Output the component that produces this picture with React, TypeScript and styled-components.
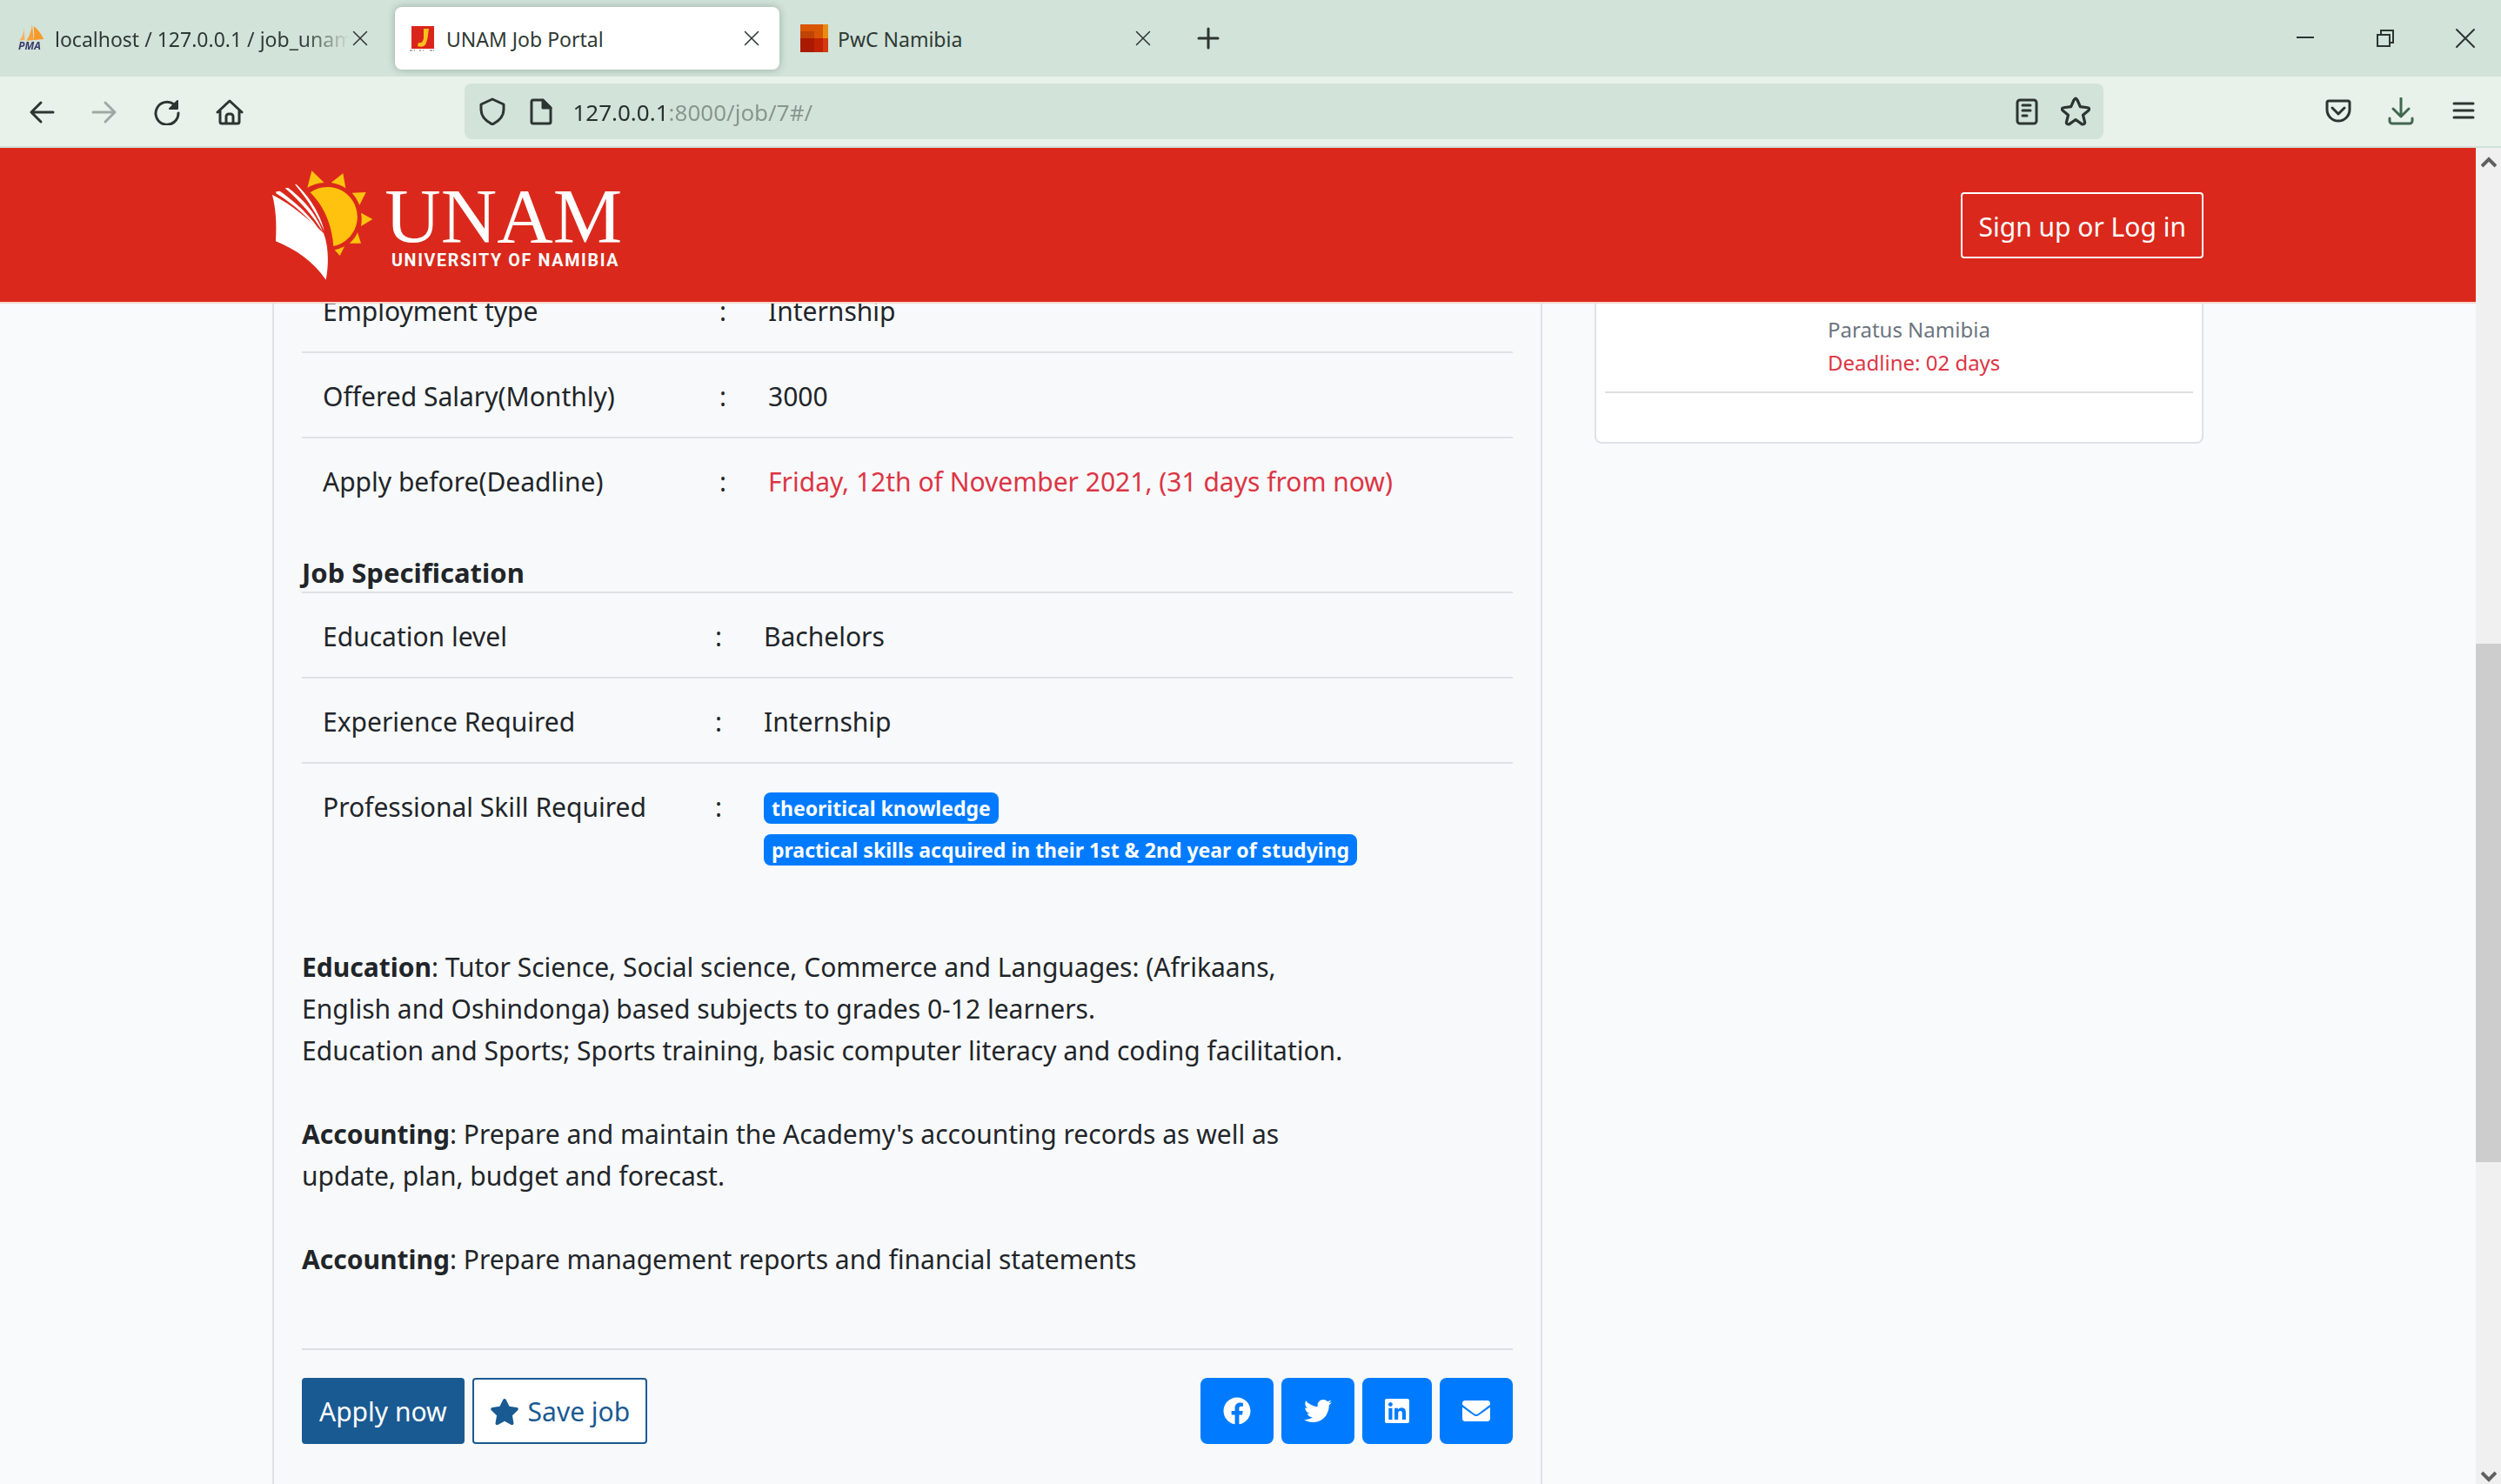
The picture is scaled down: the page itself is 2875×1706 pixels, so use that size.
import React from "react";
import styled, { createGlobalStyle } from "styled-components";
import { FaFacebook, FaTwitter, FaLinkedin, FaEnvelope, FaStar } from "react-icons/fa";

const ui = `"Noto Sans", "Open Sans", sans-serif`;

const GlobalStyle = createGlobalStyle`
  *, *::before, *::after { box-sizing: border-box; }
  body { margin: 0; background: #f8fafc; font-family: ${ui}; color: #212529; }
  button, input { font-family: inherit; }
  svg { flex: none; }
`;

const Shell = styled.div`
  display: flex;
  flex-direction: column;
  height: 100vh;
  overflow: hidden;
`;

/* ---------- browser chrome ---------- */

const TabStrip = styled.div`
  display: flex;
  justify-content: space-between;
  flex: none;
  height: 88px;
  background: #d2e3d9;
`;

const Tabs = styled.div`
  display: flex;
  gap: 8px;
  padding: 8px 4px;
`;

const Tab = styled.div<{ $active?: boolean }>`
  display: flex;
  align-items: center;
  width: 442px;
  height: 72px;
  padding: 0 20px 0 16px;
  border-radius: 8px;
  background: ${(p) => (p.$active ? "#ffffff" : "transparent")};
  box-shadow: ${(p) => (p.$active ? "0 0 8px rgba(60, 90, 75, 0.4)" : "none")};
`;

const TabButton = styled.button<{ $fade?: boolean }>`
  display: flex;
  align-items: center;
  gap: 11px;
  flex: 1;
  min-width: 0;
  padding: 0;
  border: 0;
  background: none;
  color: #2f3a34;
  font-size: 23px;
  line-height: 32px;
  white-space: nowrap;
  overflow: hidden;
  text-align: left;
  ${(p) => (p.$fade ? "mask-image: linear-gradient(to right, #000 86%, transparent 100%);" : "")}
`;

const TabTitle = styled.span`
  padding-top: 2px;
`;

const IconButton = styled.button<{ $width: number }>`
  display: flex;
  align-items: center;
  justify-content: center;
  flex: none;
  width: ${(p) => p.$width}px;
  align-self: stretch;
  padding: 0;
  border: 0;
  background: none;
  color: #2c3530;
`;

const WindowButtons = styled.div`
  display: flex;
  gap: 10px;
`;

const Toolbar = styled.div`
  display: flex;
  align-items: center;
  flex: none;
  height: 82px;
  padding: 0 7px 0 12px;
  background: #e8f2eb;
  border-bottom: 2px solid #d0e1d9;
`;

const ToolGroup = styled.div`
  display: flex;
  height: 64px;
`;

const Spacer = styled.div`
  flex: 1;
`;

const UrlBar = styled.form`
  display: flex;
  align-items: center;
  flex: 8;
  height: 64px;
  padding: 0 4px;
  border-radius: 8px;
  background: #d2e3d9;
`;

const UrlInput = styled.input`
  flex: 1;
  min-width: 0;
  height: 40px;
  margin-left: 6px;
  padding: 2px 0 0;
  border: 0;
  outline: 0;
  font-size: 26px;
  color: #26302b;
  background: linear-gradient(to right, #26302b 110px, #87958d 110px);
  background-clip: text;
  -webkit-text-fill-color: transparent;
`;

/* ---------- page ---------- */

const Viewport = styled.div`
  display: flex;
  flex: 1;
  min-height: 0;
`;

const Page = styled.div`
  flex: 1;
  min-width: 0;
  overflow: hidden;
`;

const Scrollbar = styled.div`
  display: flex;
  flex-direction: column;
  align-items: center;
  flex: none;
  width: 29px;
  padding: 10px 0 2px;
  background: #f0f0f0;
`;

const Thumb = styled.div`
  width: 29px;
  height: 596px;
  margin: 546px 0 auto;
  background: #cdcdcd;
`;

const Container = styled.div`
  width: 100%;
  max-width: 2220px;
  margin: 0 auto;
`;

const Header = styled.header`
  position: relative;
  z-index: 1;
  background: #da291c;
  border-bottom: 2px solid #f5d6d0;
`;

const HeaderRow = styled(Container)`
  display: flex;
  align-items: center;
  justify-content: space-between;
  height: 177px;
`;

const LoginLink = styled.a`
  padding: 14px 18px 10px;
  border: 2px solid #ffffff;
  border-radius: 4px;
  color: #ffffff;
  font-size: 30px;
  line-height: 48px;
  text-decoration: none;
`;

const Columns = styled(Container)`
  display: grid;
  grid-template-columns: minmax(0, 1460fr) minmax(0, 700fr);
  column-gap: 60px;
  align-items: start;
  margin-top: -43px;
`;

const JobCard = styled.main`
  padding: 0 32px 120px;
  border: 2px solid #dee2e6;
  border-top: 0;
  background: #f8f9fa;
  font-size: 30px;
  line-height: 48px;
`;

const DataTable = styled.table<{ $label: number }>`
  width: 100%;
  table-layout: fixed;
  border-collapse: collapse;
  th, td {
    padding: 26px 24px 22px;
    border-top: 2px solid #dee2e6;
    text-align: left;
    vertical-align: top;
    font-weight: 400;
  }
  th { width: ${(p) => p.$label}px; }
  td:nth-child(2) { width: 56px; }
  td:nth-child(3) { padding-right: 0; }
`;

const SectionTitle = styled.h2`
  margin: 38px 0 2px;
  font-size: 31px;
  line-height: 40px;
  font-weight: 700;
`;

const Danger = styled.span`
  color: #dc3545;
`;

const Skills = styled.ul`
  display: flex;
  flex-direction: column;
  align-items: flex-start;
  gap: 12px;
  margin: 0;
  padding: 7px 0 5px;
  list-style: none;
`;

const Badge = styled.li`
  padding: 2px 9px;
  border-radius: 8px;
  background: #007bff;
  color: #ffffff;
  font-size: 23px;
  line-height: 32px;
  font-weight: 700;
  white-space: nowrap;
`;

const Description = styled.div`
  padding: 66px 0 78px;
  border-bottom: 2px solid #dcdfe2;
  p { margin: 0 0 48px; }
  p:last-child { margin-bottom: 0; }
`;

const Actions = styled.div`
  display: flex;
  justify-content: space-between;
  padding-top: 32px;
`;

const Group = styled.div`
  display: flex;
  gap: 9px;
`;

const ActionButton = styled.button<{ $outline?: boolean }>`
  display: flex;
  align-items: center;
  gap: 10px;
  height: 76px;
  padding: 2px 18px 0;
  border: 2px solid #1a5a92;
  border-radius: 4px;
  background: ${(p) => (p.$outline ? "#ffffff" : "#1a5a92")};
  color: ${(p) => (p.$outline ? "#1a5a92" : "#ffffff")};
  font-size: 30px;
  line-height: 48px;
`;

const ShareLink = styled.a<{ $narrow?: boolean }>`
  display: flex;
  align-items: center;
  justify-content: center;
  width: ${(p) => (p.$narrow ? 80 : 84)}px;
  height: 76px;
  border-radius: 8px;
  background: #007bff;
  color: #ffffff;
`;

const SideCard = styled.aside`
  padding: 0 10px 56px;
  border: 2px solid #dee2e6;
  border-radius: 0 0 8px 8px;
  border-top: 0;
  background: #ffffff;
`;

const SideJob = styled.div`
  padding: 54px 0 14px 256px;
  border-bottom: 2px solid #dfdfe0;
  font-size: 24px;
  line-height: 38px;
  color: #6c757d;
  p { margin: 0; }
`;

/* ---------- drawings ---------- */

type StrokeProps = { size: number; w?: number; color?: string; children: React.ReactNode };

const Stroke = ({ size, w = 3, color = "currentColor", children }: StrokeProps) => (
  <svg width={size} height={size} viewBox="0 0 32 32" fill="none" stroke={color} strokeWidth={w} strokeLinecap="round" strokeLinejoin="round" aria-hidden="true">
    {children}
  </svg>
);

const CloseIcon = () => (
  <Stroke size={24} w={2}><path d="M6 6l20 20M26 6L6 26" /></Stroke>
);

const PmaIcon = () => (
  <svg width="32" height="36" viewBox="0 0 34 38" aria-hidden="true">
    <path d="M8 6C8 12 6 18 2 22l7-1z" fill="#f9b163" />
    <path d="M18 2c-1 8-3 14-7 20l9-1z" fill="#f7a13c" />
    <path d="M20 4c0 7 1 12 0 17l12-1C29 13 25 8 20 4z" fill="#f79a2a" />
    <text x="1" y="33" fontSize="13" fontWeight="700" fontStyle="italic" fontFamily="Open Sans, sans-serif" fill="#3b3a6b">PMA</text>
  </svg>
);

const JobIcon = () => (
  <svg width="32" height="32" viewBox="0 0 32 32" aria-hidden="true">
    <rect x="3" y="2" width="26" height="26" fill="#da251c" />
    <path d="M17 5h6c-1 6-1 11-3 16-1 4-5 6-10 4l1-4c4 1 5-1 6-5z" fill="#fcc21b" />
    <path d="M1 30h3M6 30h1M12 30h2M16 30h1M24 30h3M28 30h1" stroke="#6a6a6a" strokeWidth="1" />
  </svg>
);

const PwcIcon = () => (
  <svg width="32" height="32" viewBox="0 0 32 32" aria-hidden="true">
    <path fill="#d85604" d="M0 0h26v16H0z" />
    <path fill="#e88d14" d="M26 0h6v16h-6z" />
    <path fill="#c04405" d="M0 8h16v8H0z" />
    <path fill="#aa1a02" d="M0 16h16v16H0z" />
    <path fill="#c02203" d="M16 16h10v16H16z" />
    <path fill="#d33a12" d="M26 16h6v16h-6z" />
  </svg>
);

const UnamLogo = () => (
  <svg width="404" height="134" viewBox="69 64 1212 402" role="img" aria-label="UNAM University of Namibia">
    <g fill="#ffc20e">
      <path d="M200 152A103 103 0 1 1 280 337C274 262 248 200 200 152z" />
      <path d="M205 77L248 118Q216 120 190 135z" />
      <path d="M313 86L322 137Q300 122 272 118z" />
      <path d="M392 151L370 195Q360 170 344 153z" />
      <path d="M415 244L375 268Q379 245 375 222z" />
      <path d="M375 327H335Q354 312 363 290z" />
      <path d="M318 338L302 370L284 350Q302 346 318 338z" />
    </g>
    <g fill="#ffffff">
      <path d="M69 160C130 190 190 240 246 292C264 340 264 400 254 453C210 390 150 348 81 320C84 260 82 210 69 160z" />
      <path d="M82 149L95 147C150 185 205 235 238 292C195 240 140 190 82 155z" />
      <path d="M113 137L124 136C170 170 222 225 243 288C215 240 165 182 113 137z" />
      <path d="M147 124L153 125C195 165 235 225 248 285C225 230 190 175 147 124z" />
      <text x="457" y="323" fontSize="268" fontFamily="Liberation Serif, serif">UNAM</text>
      <text x="480" y="407" fontSize="59" fontWeight="700" fontFamily="Roboto, sans-serif" letterSpacing="5">UNIVERSITY OF NAMIBIA</text>
    </g>
  </svg>
);

type Row = { label: string; value: React.ReactNode };

const Rows = ({ rows, label }: { rows: Row[]; label: number }) => (
  <DataTable $label={label}>
    <tbody>
      {rows.map((r) => (
        <tr key={r.label}>
          <th scope="row">{r.label}</th>
          <td>:</td>
          <td>{r.value}</td>
        </tr>
      ))}
    </tbody>
  </DataTable>
);

const summary: Row[] = [
  { label: "Employment type", value: "Internship" },
  { label: "Offered Salary(Monthly)", value: "3000" },
  { label: "Apply before(Deadline)", value: <Danger>Friday, 12th of November 2021, (31 days from now)</Danger> },
];

const specification: Row[] = [
  { label: "Education level", value: "Bachelors" },
  { label: "Experience Required", value: "Internship" },
  {
    label: "Professional Skill Required",
    value: (
      <Skills>
        <Badge>theoritical knowledge</Badge>
        <Badge>practical skills acquired in their 1st &amp; 2nd year of studying</Badge>
      </Skills>
    ),
  },
];

const tabs = [
  { title: "localhost / 127.0.0.1 / job_unam", icon: <PmaIcon />, fade: true },
  { title: "UNAM Job Portal", icon: <JobIcon />, active: true },
  { title: "PwC Namibia", icon: <PwcIcon /> },
];

export default function App() {
  return (
    <Shell>
      <GlobalStyle />
      <TabStrip>
        <Tabs>
          {tabs.map((t) => (
            <Tab key={t.title} $active={t.active}>
              <TabButton $fade={t.fade}>{t.icon}<TabTitle>{t.title}</TabTitle></TabButton>
              <IconButton $width={24} aria-label="Close tab"><CloseIcon /></IconButton>
            </Tab>
          ))}
          <IconButton $width={70} aria-label="New tab">
            <Stroke size={32}><path d="M16 5v22M5 16h22" /></Stroke>
          </IconButton>
        </Tabs>
        <WindowButtons>
          <IconButton $width={82} aria-label="Minimize">
            <Stroke size={32} w={2}><path d="M6 15h20" strokeLinecap="butt" /></Stroke>
          </IconButton>
          <IconButton $width={82} aria-label="Restore">
            <Stroke size={32} w={2}><path d="M7 12h14v13H7zM11 12V7h14v14h-4" strokeLinejoin="miter" /></Stroke>
          </IconButton>
          <IconButton $width={82} aria-label="Close window">
            <Stroke size={32} w={2}><path d="M6 6l20 20M26 6L6 26" /></Stroke>
          </IconButton>
        </WindowButtons>
      </TabStrip>

      <Toolbar>
        <ToolGroup>
          <IconButton $width={72} aria-label="Back">
            <Stroke size={32}><path d="M29 17H4M15 6L4 17l11 11" /></Stroke>
          </IconButton>
          <IconButton $width={72} aria-label="Forward">
            <Stroke size={32} color="#9fa9a3"><path d="M3 17h25M17 6l11 11-11 11" /></Stroke>
          </IconButton>
          <IconButton $width={72} aria-label="Reload">
            <Stroke size={32}><path d="M29 18A13 13 0 1 1 24 8" /><path d="M28 4v9h-9z" fill="currentColor" strokeWidth="2" /></Stroke>
          </IconButton>
          <IconButton $width={72} aria-label="Home">
            <Stroke size={32}><path d="M2 17L16 4l14 13M5 15v13a2 2 0 0 0 2 2h18a2 2 0 0 0 2-2V15M12 30v-8a3 3 0 0 1 3-3h2a3 3 0 0 1 3 3v8" /></Stroke>
          </IconButton>
        </ToolGroup>
        <Spacer />
        <UrlBar>
          <IconButton type="button" $width={56} aria-label="Tracking protection">
            <Stroke size={32}><path d="M16 2l13 6v6c0 8-5 13-13 17C8 27 3 22 3 14V8z" /></Stroke>
          </IconButton>
          <IconButton type="button" $width={58} aria-label="Site information">
            <Stroke size={32}><path d="M6 3h11l9 9v16a2 2 0 0 1-2 2H6a2 2 0 0 1-2-2V5a2 2 0 0 1 2-2z" /><path d="M17 3v9h9z" fill="currentColor" /></Stroke>
          </IconButton>
          <UrlInput aria-label="Address" defaultValue="127.0.0.1:8000/job/7#/" />
          <IconButton type="button" $width={56} aria-label="Reader view">
            <Stroke size={32}><rect x="5" y="3" width="22" height="27" rx="3" /><path d="M11 9h9M11 15h9M11 21h5" /></Stroke>
          </IconButton>
          <IconButton type="button" $width={56} aria-label="Bookmark">
            <Stroke size={34} w={3}><path d="M16 2c1 0 1 1 2 2l3 7 8 1c2 0 2 2 1 3l-6 5 2 8c0 2-1 2-3 2l-7-5-7 5c-2 0-3 0-3-2l2-8-6-5c-1-1-1-3 1-3l8-1 3-7c1-1 1-2 2-2z" /></Stroke>
          </IconButton>
        </UrlBar>
        <Spacer />
        <ToolGroup>
          <IconButton $width={72} aria-label="Pocket">
            <Stroke size={32}><path d="M5 4h22a2 2 0 0 1 2 2v8a13 13 0 0 1-26 0V6a2 2 0 0 1 2-2zM9 12l7 7 7-7" /></Stroke>
          </IconButton>
          <IconButton $width={72} aria-label="Downloads">
            <Stroke size={32} color="#41684f"><path d="M16 1v20M7 13l9 9 9-9M3 24v3a3 3 0 0 0 3 3h20a3 3 0 0 0 3-3v-3" /></Stroke>
          </IconButton>
          <IconButton $width={72} aria-label="Menu">
            <Stroke size={32}><path d="M5 7h22M5 15h22M5 23h22" /></Stroke>
          </IconButton>
        </ToolGroup>
      </Toolbar>

      <Viewport>
        <Page>
          <Header>
            <HeaderRow>
              <UnamLogo />
              <LoginLink href="#login">Sign up or Log in</LoginLink>
            </HeaderRow>
          </Header>

          <Columns>
            <JobCard>
              <Rows rows={summary} label={456} />
              <SectionTitle>Job Specification</SectionTitle>
              <Rows rows={specification} label={451} />
              <Description>
                <p>
                  <b>Education</b>: Tutor Science, Social science, Commerce and Languages: (Afrikaans,<br />
                  English and Oshindonga) based subjects to grades 0-12 learners.<br />
                  Education and Sports; Sports training, basic computer literacy and coding facilitation.
                </p>
                <p>
                  <b>Accounting</b>: Prepare and maintain the Academy's accounting records as well as<br />
                  update, plan, budget and forecast.
                </p>
                <p><b>Accounting</b>: Prepare management reports and financial statements</p>
              </Description>
              <Actions>
                <Group>
                  <ActionButton>Apply now</ActionButton>
                  <ActionButton $outline><FaStar size={34} aria-hidden="true" />Save job</ActionButton>
                </Group>
                <Group>
                  <ShareLink href="#facebook" aria-label="Facebook"><FaFacebook size={32} /></ShareLink>
                  <ShareLink href="#twitter" aria-label="Twitter"><FaTwitter size={32} /></ShareLink>
                  <ShareLink $narrow href="#linkedin" aria-label="LinkedIn"><FaLinkedin size={32} /></ShareLink>
                  <ShareLink href="#email" aria-label="Email"><FaEnvelope size={32} /></ShareLink>
                </Group>
              </Actions>
            </JobCard>

            <SideCard>
              <SideJob>
                <p>Paratus Namibia</p>
                <p><Danger>Deadline: 02 days</Danger></p>
              </SideJob>
            </SideCard>
          </Columns>
        </Page>
        <Scrollbar aria-hidden="true">
          <svg width="18" height="14" viewBox="0 0 18 14"><path d="M1 11L9 3l8 8" fill="none" stroke="#606060" strokeWidth="4" /></svg>
          <Thumb />
          <svg width="18" height="14" viewBox="0 0 18 14"><path d="M1 3l8 8 8-8" fill="none" stroke="#606060" strokeWidth="4" /></svg>
        </Scrollbar>
      </Viewport>
    </Shell>
  );
}
